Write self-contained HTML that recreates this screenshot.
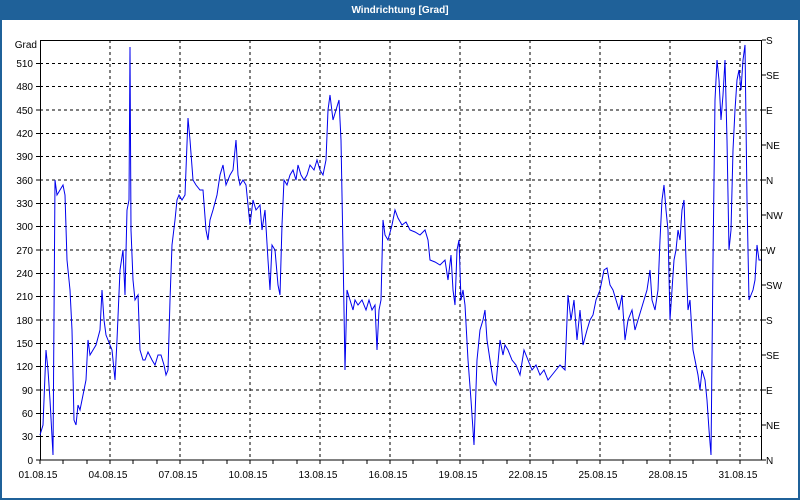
<!DOCTYPE html>
<html><head><meta charset="utf-8"><style>
html,body{margin:0;padding:0;width:800px;height:500px;overflow:hidden;background:#fff;font-family:"Liberation Sans",sans-serif}
</style></head><body>
<svg width="800" height="500" xmlns="http://www.w3.org/2000/svg" style="display:block">
<rect x="0" y="0" width="800" height="500" fill="#1f6199"/>
<rect x="2" y="20" width="796" height="478" fill="#fff"/>
<text x="400" y="13" fill="#fff" font-size="10" font-weight="bold" text-anchor="middle" font-family="Liberation Sans, sans-serif">Windrichtung [Grad]</text>
<g stroke="#000" stroke-width="1" stroke-dasharray="3,3" fill="none" shape-rendering="crispEdges">
<path d="M40 63.3H762M40 86.7H762M40 110H762M40 133.3H762M40 156.7H762M40 180H762M40 203.3H762M40 226.7H762M40 250H762M40 273.3H762M40 296.7H762M40 320H762M40 343.3H762M40 366.7H762M40 390H762M40 413.3H762M40 436.7H762"/>
<path d="M110 40V460M180 40V460M250 40V460M320 40V460M390 40V460M460 40V460M530 40V460M600 40V460M670 40V460M740 40V460"/>
</g>
<g stroke="#000" stroke-width="1" fill="none" shape-rendering="crispEdges">
<rect x="40.5" y="40.5" width="721" height="419.5"/>
<path d="M40 63.3h-4M40 86.7h-4M40 110h-4M40 133.3h-4M40 156.7h-4M40 180h-4M40 203.3h-4M40 226.7h-4M40 250h-4M40 273.3h-4M40 296.7h-4M40 320h-4M40 343.3h-4M40 366.7h-4M40 390h-4M40 413.3h-4M40 436.7h-4M40 460h-4"/>
<path d="M762 40h4M762 75h4M762 110h4M762 145h4M762 180h4M762 215h4M762 250h4M762 285h4M762 320h4M762 355h4M762 390h4M762 425h4M762 460h4"/>
<path d="M40 460v4M63 460v4M87 460v4M110 460v4M133 460v4M157 460v4M180 460v4M203 460v4M227 460v4M250 460v4M273 460v4M297 460v4M320 460v4M343 460v4M367 460v4M390 460v4M413 460v4M437 460v4M460 460v4M483 460v4M507 460v4M530 460v4M553 460v4M577 460v4M600 460v4M623 460v4M647 460v4M670 460v4M693 460v4M717 460v4M740 460v4"/>
</g>
<g font-size="10" fill="#000" text-anchor="end" font-family="Liberation Sans, sans-serif">
<text x="37" y="48">Grad</text>
<text x="33" y="67">510</text><text x="33" y="90">480</text><text x="33" y="114">450</text><text x="33" y="137">420</text><text x="33" y="160">390</text><text x="33" y="184">360</text><text x="33" y="207">330</text><text x="33" y="230">300</text><text x="33" y="254">270</text><text x="33" y="277">240</text><text x="33" y="300">210</text><text x="33" y="324">180</text><text x="33" y="347">150</text><text x="33" y="370">120</text><text x="33" y="394">90</text><text x="33" y="417">60</text><text x="33" y="440">30</text><text x="33" y="464">0</text>
</g>
<g font-size="10" fill="#000" font-family="Liberation Sans, sans-serif">
<text x="766" y="44">S</text><text x="766" y="79">SE</text><text x="766" y="114">E</text><text x="766" y="149">NE</text><text x="766" y="184">N</text><text x="766" y="219">NW</text><text x="766" y="254">W</text><text x="766" y="289">SW</text><text x="766" y="324">S</text><text x="766" y="359">SE</text><text x="766" y="394">E</text><text x="766" y="429">NE</text><text x="766" y="464">N</text>
</g>
<g font-size="10" fill="#000" text-anchor="middle" font-family="Liberation Sans, sans-serif">
<text x="38" y="478">01.08.15</text><text x="108" y="478">04.08.15</text><text x="178" y="478">07.08.15</text><text x="248" y="478">10.08.15</text><text x="318" y="478">13.08.15</text><text x="388" y="478">16.08.15</text><text x="458" y="478">19.08.15</text><text x="528" y="478">22.08.15</text><text x="598" y="478">25.08.15</text><text x="668" y="478">28.08.15</text><text x="738" y="478">31.08.15</text>
</g>
<polyline fill="none" stroke="#0000ee" stroke-width="1" points="40,435 43,425 46,350 48,370 50,400 53,455 55,180 57,195 60,190 63,185 65,195 67,260 70,290 72,330 74,420 76,425 78,405 80,410 83,395 86,380 88,340 90,355 93,350 96,345 100,330 102,290 104,320 106,335 108,340 112,350 115,380 117,340 120,270 123,250 125,295 127,210 129,200 130,47 131,230 133,280 135,300 138,295 140,350 143,360 145,360 148,352 152,360 155,365 158,355 161,355 164,365 166,375 168,370 170,300 172,245 175,220 177,200 179,195 182,200 185,195 188,118 190,140 193,180 196,185 200,190 203,190 206,230 208,240 210,220 213,210 217,195 220,175 223,165 226,185 230,175 233,170 236,140 238,175 240,185 243,180 246,185 250,225 253,200 256,210 260,205 262,230 265,210 268,260 270,290 272,245 275,250 278,285 280,295 282,225 284,180 287,185 290,175 293,170 296,180 298,165 301,175 304,180 307,175 310,165 314,170 317,160 320,170 323,175 326,160 328,110 330,95 333,120 336,110 339,100 341,140 343,250 345,370 347,290 350,300 353,310 355,300 358,305 362,300 366,310 369,300 372,310 375,305 377,350 379,310 381,300 383,220 385,235 388,240 392,225 395,210 398,218 402,225 406,222 410,230 415,232 420,235 425,230 428,240 430,260 435,262 440,265 445,260 448,280 451,255 453,290 455,305 457,250 459,240 461,300 463,290 465,305 468,360 471,400 474,445 477,360 480,330 483,320 485,310 487,340 490,360 493,380 496,385 500,340 503,355 505,345 508,350 512,360 516,365 520,375 524,350 528,360 532,370 536,365 540,375 544,370 548,380 552,375 556,370 560,365 565,370 568,295 571,320 574,300 577,340 580,310 583,345 587,330 590,320 593,315 596,300 600,290 604,270 607,268 610,285 613,290 616,300 619,310 622,295 625,340 628,320 632,310 635,330 638,320 641,310 644,300 647,290 650,270 652,300 655,310 658,290 660,240 662,200 664,185 666,210 668,230 670,320 672,290 674,260 676,250 678,230 680,240 682,210 684,200 686,260 688,310 690,300 693,350 696,365 698,375 700,390 702,370 705,380 707,400 709,430 711,455 713,260 715,100 717,60 719,80 721,120 723,95 725,60 727,140 729,250 731,230 733,150 735,110 737,80 739,70 741,90 743,60 745,45 747,200 749,300 751,295 753,290 755,280 757,245 759,260 761,260"/>
</svg>
</body></html>
